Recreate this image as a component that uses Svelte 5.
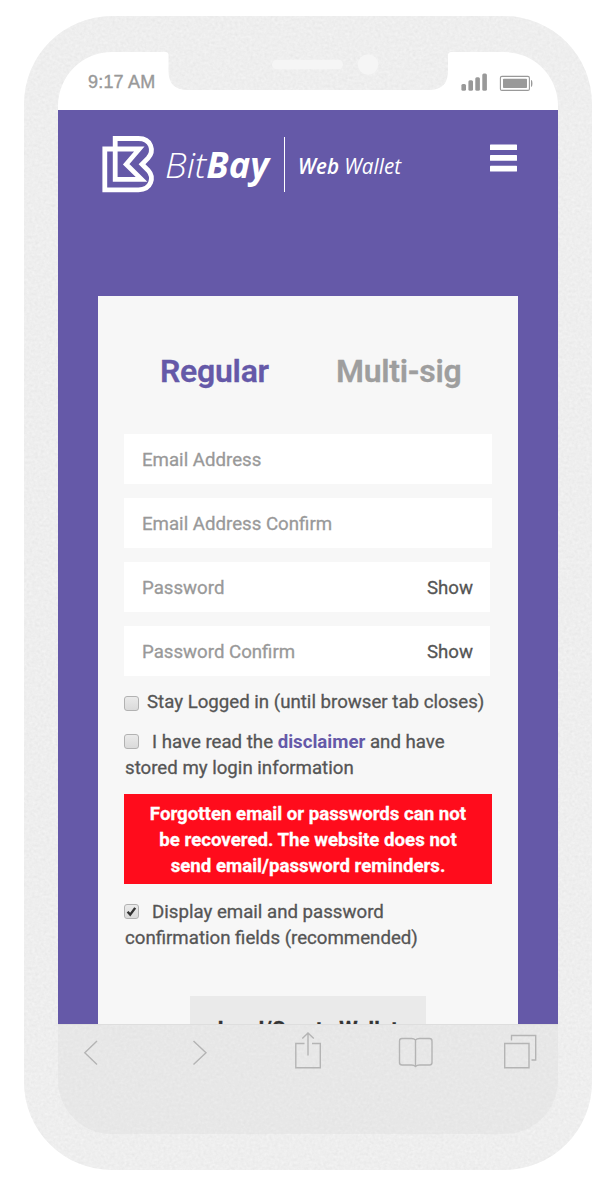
<script>
  const fields = [
    { label: 'Email Address', secret: false },
    { label: 'Email Address Confirm', secret: false },
    { label: 'Password', secret: true },
    { label: 'Password Confirm', secret: true }
  ];
</script>

<div class="phone">
  <svg class="grain" width="568" height="1154" aria-hidden="true">
    <filter id="grain" x="0" y="0" width="100%" height="100%" color-interpolation-filters="sRGB">
      <feTurbulence type="fractalNoise" baseFrequency="0.35" numOctaves="2" seed="4" />
      <feColorMatrix values="0.5 0.5 0.5 0 -0.25  0.5 0.5 0.5 0 -0.25  0.5 0.5 0.5 0 -0.25  0 0 0 0 0.06" />
    </filter>
    <rect width="568" height="1154" filter="url(#grain)" />
  </svg>

  <div class="screen">
    <header class="status">
      <span class="time">9:17 AM</span>
      <svg width="72" height="20" viewBox="0 0 72 20" fill="#999">
        <rect x="0.4" y="12" width="4.6" height="6.7" rx="1.5" />
        <rect x="7.4" y="8.3" width="4.6" height="10.4" rx="1.5" />
        <rect x="14.3" y="5.2" width="4.6" height="13.5" rx="1.5" />
        <rect x="21.3" y="1.4" width="4.6" height="17.3" rx="1.5" />
        <rect x="39.4" y="4.4" width="29" height="14" rx="1.5" fill="none" stroke="#999" stroke-width="1.1" />
        <rect x="42" y="6.8" width="24" height="9.2" rx="0.8" />
        <path d="M70 8q1.4 0 1.4 3.4t-1.4 3.4z" />
      </svg>
    </header>

    <main class="page">
      <nav class="top">
        <svg class="logo" width="312" height="62" viewBox="0 0 312 62" fill="#fff">
          <path
            d="M16.2 45.4V4.5H39.5C52.5 4.5 55.5 17 49 24.2L43 30.3L49 36.2C55.5 43.5 52.5 55.8 39.5 55.8H5.8V15H40.3L27.2 30.3L42.500 45.4Z"
            fill="none" stroke="#fff" stroke-width="4.8" />
          <text class="brand" x="66" y="43.5" textLength="104" lengthAdjust="spacingAndGlyphs"><tspan class="light">Bit</tspan><tspan class="bold">Bay</tspan></text>
          <rect x="185" y="3" width="1" height="55" />
          <text class="product" x="199" y="39.5" textLength="103" lengthAdjust="spacingAndGlyphs"><tspan class="bold">Web</tspan> Wallet</text>
        </svg>
        <svg class="burger" width="28" height="28" viewBox="0 0 28 28" fill="#fff">
          <rect x="0" y="0.4" width="27" height="5.6" rx="0.6" />
          <rect x="0" y="11" width="27" height="5.8" rx="0.6" />
          <rect x="0" y="21.8" width="27" height="5.8" rx="0.6" />
        </svg>
      </nav>

      <section class="card">
        <div class="tabs">
          <span class="tab active">Regular</span>
          <span class="tab">Multi-sig</span>
        </div>

        <div class="fields">
          {#each fields as field}
            <div class="field" class:secret={field.secret}>
              <span>{field.label}</span>
              {#if field.secret}<b class="show">Show</b>{/if}
            </div>
          {/each}
        </div>

        <div class="option stay"><i class="box"></i><span>Stay Logged in (until browser tab closes)</span></div>
        <div class="option read"><i class="box"></i><span>I have read the <b>disclaimer</b> and have</span><br /><span class="second-line">stored my login information</span></div>
        <div class="warning">
          Forgotten email or passwords can not<br />
          be recovered. The website does not<br />
          send email/password reminders.
        </div>
        <div class="option display">
          <i class="box"><svg width="11" height="11" viewBox="0 0 11 11"><path d="M1.6 5.8L4.2 8.6L9.2 1.9" fill="none" stroke="#333" stroke-width="2.4" /></svg></i><span>Display email and password</span><br /><span class="second-line">confirmation fields (recommended)</span>
        </div>

        <div class="load"><span>Load/Create Wallet</span></div>
      </section>
    </main>

    <footer class="toolbar">
      <svg width="500" height="56" viewBox="0 0 500 56" fill="none" stroke="#b4b4b4" stroke-width="1.4">
        <path d="M39 18L26.8 29.8L39 41.4" />
        <path d="M135.5 18L148 29.8L135.5 41.4" />
        <path d="M246.5 20.5H237.8V44.8H262.300V20.5H254M250 32.5V10M244.3 15.5L250 10L255.8 15.5" />
        <path d="M357.5 17Q356 15.500 353.5 15.500H344Q341.5 15.500 341.5 18V39.500Q341.5 42 344 42H353.5Q356 42 357.5 43.500Q359 42 361.5 42H371.5Q374 42 374 39.500V18Q374 15.500 371.5 15.500H361.5Q359 15.500 357.5 17V43.500" />
        <path d="M446.7 20.500H471V44.800H446.700ZM453.500 17.500V12.500H477.700V37H473.500" />
      </svg>
    </footer>
  </div>

  <svg class="notch" width="292" height="40" viewBox="0 0 292 40">
    <clipPath id="notch-shape">
      <path d="M0 0H286V1H284Q280.500 1 280.500 4V20Q280.500 39 261.500 39H20Q1 39 1 20V4Q1 1 -2 1H0Z" transform="translate(5.5 0)" />
    </clipPath>
    <g clip-path="url(#notch-shape)">
      <rect width="292" height="40" fill="#f5f5f5" />
      <rect width="292" height="40" filter="url(#grain)" />
    </g>
    <rect x="110" y="8.8" width="71" height="9.5" rx="4.7" fill="#f5f5f5" />
    <circle cx="206" cy="13.5" r="10.3" fill="#f5f5f5" />
  </svg>
</div>

<style>
  :global(body) { background: #fff; }
  .phone {
    position: relative;
    box-sizing: border-box;
    width: 568px;
    height: 1154px;
    margin: 16px 0 0 24px;
    padding: 36px 34px;
    border-radius: 88px;
    background: #f5f5f5;
    overflow: hidden;
    font-family: Roboto, sans-serif;
  }
  .grain { position: absolute; inset: 0; }
  .screen {
    position: relative;
    display: grid;
    grid-template-rows: 58px 914px 110px;
    width: 500px;
    height: 1082px;
    border-radius: 54px;
    overflow: hidden;
  }
  .status {
    display: flex;
    justify-content: space-between;
    align-items: flex-start;
    padding: 20px 25px 0 30px;
    background: #fff;
  }
  .time {
    font: 18px/20px "Liberation Sans", sans-serif;
    letter-spacing: 0.2px;
    color: #999;
    -webkit-text-stroke: 0.4px #999;
  }
  .page { overflow: hidden; background: #6559a8; }
  .top {
    display: flex;
    justify-content: space-between;
    align-items: flex-start;
    height: 186px;
    box-sizing: border-box;
    padding: 24px 40px 0 41px;
  }
  .burger { margin-top: 10px; }
  .brand { font: italic 35px "Open Sans", sans-serif; }
  .product { font: italic 22px "Open Sans", sans-serif; }
  .light { font-weight: 300; }
  .bold { font-weight: 700; }
  .product .bold { font-weight: 600; }
  .card {
    box-sizing: border-box;
    width: 420px;
    height: 740px;
    margin: 0 auto;
    padding: 55px 26px 0;
    background: #f7f7f7;
    color: #555;
    font-size: 18.66px;
    line-height: 26px;
    -webkit-text-stroke-width: 0.3px;
    white-space: nowrap;
  }
  .tabs {
    display: flex;
    gap: 67px;
    height: 83px;
    padding-left: 36px;
    font-size: 32px;
    line-height: 40px;
    font-weight: 600;
    color: #9e9e9e;
    letter-spacing: -0.25px;
  }
  .tab.active { color: #6559a8; }
  .fields { display: grid; gap: 14px; }
  .field {
    display: flex;
    justify-content: space-between;
    align-items: center;
    box-sizing: border-box;
    height: 50px;
    padding: 2px 17px 0 18px;
    background: #fff;
    color: #999;
  }
  .secret { width: 366px; }
  .show { font-weight: 400; color: #555; }
  .box {
    display: inline-grid;
    place-items: center;
    box-sizing: border-box;
    width: 15px;
    height: 15px;
    border: 1px solid #b2b2b2;
    border-radius: 3px;
    background: linear-gradient(#eaeaea, #dadada);
    vertical-align: -1px;
  }
  .stay { margin-top: 13px; }
  .stay .box { vertical-align: -3px; margin-right: 8px; }
  .read { margin-top: 14px; }
  .read .box { margin-right: 13px; }
  .display .box { margin-right: 13px; vertical-align: 1px; }
  .read b { color: #6559a8; -webkit-text-stroke-width: 0; }
  .second-line { margin-left: 1px; }
  .warning {
    height: 83px;
    margin-top: 13px;
    padding-top: 7px;
    background: #ff0c1c;
    color: #fff;
    font-weight: 700;
    text-align: center;
  }
  .display { margin-top: 15px; }
  .load {
    width: 236px;
    height: 60px;
    margin: 45px auto 0 66px;
    padding-top: 20px;
    background: #eaeaea;
    color: #333;
    font-size: 21px;
    font-weight: 700;
    text-align: center;
  }
  .toolbar {
    box-sizing: border-box;
    border-top: 1px solid #dedede;
    background: rgba(215, 215, 215, 0.28);
  }
  .toolbar svg { display: block; margin-top: -2px; }
  .notch { position: absolute; left: 138px; top: 35px; }
</style>
